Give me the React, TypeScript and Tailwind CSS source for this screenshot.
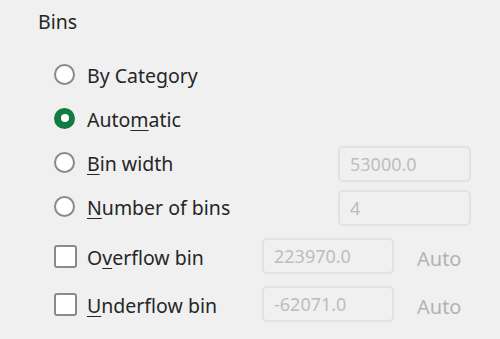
import React from 'react'

const font = { fontFamily: '"Segoe UI", "Noto Sans", "Open Sans", sans-serif' }

function Radio({ checked }: { checked?: boolean }) {
  if (checked) {
    return (
      <span className="flex h-[21px] w-[21px] shrink-0 items-center justify-center rounded-full bg-[#107c41]">
        <span className="h-[8px] w-[8px] rounded-full bg-white" />
      </span>
    )
  }
  return <span className="h-[21px] w-[21px] shrink-0 rounded-full border-2 border-[#8a8a8a] bg-white" />
}

function Checkbox() {
  return <span className="h-[23px] w-[23px] shrink-0 rounded-[3px] border-2 border-[#8a8a8a] bg-white" />
}

function Field({ value, width }: { value: string; width: string }) {
  return (
    <div
      className={`flex h-[36px] ${width} items-center rounded-[5px] border-2 border-[#e2e2e2] bg-[#f0f0f0] pl-[10px] pt-[1px] text-[18px] text-[#bdbdbd]`}
    >
      {value}
    </div>
  )
}

export default function App() {
  return (
    <div className="h-[339px] w-[500px] overflow-hidden bg-[#f0f0f0] text-[#262626]" style={font}>
      {/* Header */}
      <div className="h-[52px] pl-[38px] pt-[9px] text-[19.5px] leading-[26px]">Bins</div>

      {/* Bin type radios */}
      <div className="flex h-[44px] items-center pl-[54px]">
        <Radio />
        <span className="ml-[12px] mt-[3px] text-[19.5px]">
          By Cate<u className="underline-offset-[3px]">g</u>ory
        </span>
      </div>
      <div className="flex h-[44px] items-center pl-[54px]">
        <Radio checked />
        <span className="ml-[12px] mt-[3px] text-[19.5px]">
          Auto<u className="underline-offset-[3px]">m</u>atic
        </span>
      </div>
      <div className="flex h-[44px] items-center pl-[54px]">
        <Radio />
        <span className="ml-[12px] mt-[3px] w-[251px] text-[19.5px]">
          <u className="underline-offset-[3px]">B</u>in width
        </span>
        <div className="mt-[4px]">
          <Field value="53000.0" width="w-[133px]" />
        </div>
      </div>
      <div className="flex h-[44px] items-center pl-[54px]">
        <Radio />
        <span className="ml-[12px] mt-[3px] w-[251px] text-[19.5px]">
          <u className="underline-offset-[3px]">N</u>umber of bins
        </span>
        <div className="mt-[4px]">
          <Field value="4" width="w-[133px]" />
        </div>
      </div>

      {/* Overflow / underflow */}
      <div className="mt-[4px] flex h-[48px] items-center pl-[54px]">
        <Checkbox />
        <span className="ml-[10px] mt-[3px] w-[175px] text-[19.5px]">
          O<u className="underline-offset-[3px]">v</u>erflow bin
        </span>
        <Field value="223970.0" width="w-[132px]" />
        <span className="ml-[23px] mt-[5px] text-[20px] text-[#b3b3b3]">Auto</span>
      </div>
      <div className="flex h-[48px] items-center pl-[54px]">
        <Checkbox />
        <span className="ml-[10px] mt-[3px] w-[175px] text-[19.5px]">
          <u className="underline-offset-[3px]">U</u>nderflow bin
        </span>
        <Field value="-62071.0" width="w-[132px]" />
        <span className="ml-[23px] mt-[5px] text-[20px] text-[#b3b3b3]">Auto</span>
      </div>
    </div>
  )
}
